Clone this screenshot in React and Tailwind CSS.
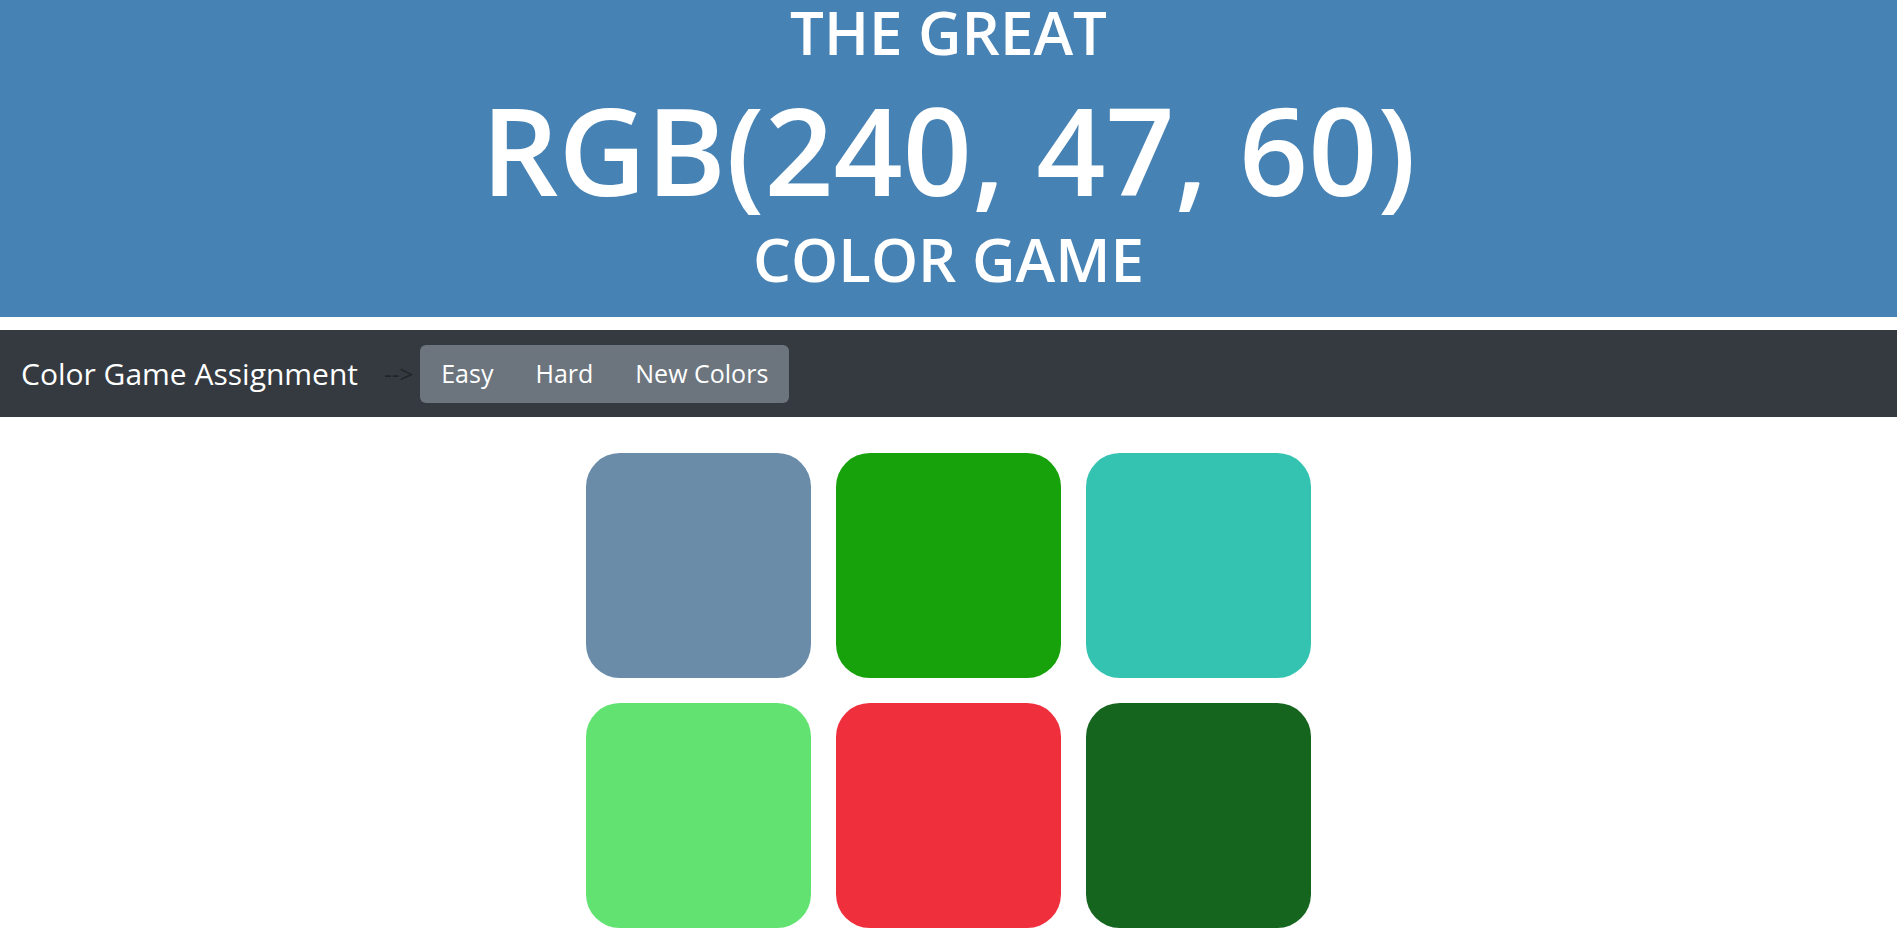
import React from "react";

const colors = [
  "#6a8ca8",
  "#17a10b",
  "#35c3b1",
  "#62e371",
  "#f02f3c",
  "#15651e",
];

export default function App() {
  return (
    <div
      className="min-h-screen bg-white"
      style={{ fontFamily: '"Open Sans", "Noto Sans", sans-serif' }}
    >
      <header className="bg-[#4682b4] text-white text-center font-semibold uppercase h-[317px] flex flex-col items-center">
        <div className="text-[60px] leading-[60px] pt-[2px]">THE GREAT</div>
        <div className="text-[121px] leading-[121px] mt-[27px]">
          RGB(240, 47, 60)
        </div>
        <div className="text-[60px] leading-[60px] mt-[19px]">COLOR GAME</div>
      </header>

      <nav className="mt-[13px] h-[87px] bg-[#343a40] flex items-center pl-[21px]">
        <span className="text-white text-[30px] leading-none">
          Color Game Assignment
        </span>
        <span className="ml-[26px] mr-[7px] text-[#212529] text-[24px] leading-none">
          --&gt;
        </span>
        <div className="h-[58px] rounded-[6px] bg-[#6c757d] flex items-center">
          <button className="px-[21px] h-full text-white text-[25px] leading-none">
            Easy
          </button>
          <button className="px-[21px] h-full text-white text-[25px] leading-none">
            Hard
          </button>
          <button className="px-[21px] h-full text-white text-[25px] leading-none">
            New Colors
          </button>
        </div>
      </nav>

      <div className="w-[750px] mx-auto mt-[24px] flex flex-wrap">
        {colors.map((c, i) => (
          <div
            key={i}
            className="w-[30%] aspect-square m-[1.66%] rounded-[15%]"
            style={{ backgroundColor: c }}
          />
        ))}
      </div>
    </div>
  );
}
